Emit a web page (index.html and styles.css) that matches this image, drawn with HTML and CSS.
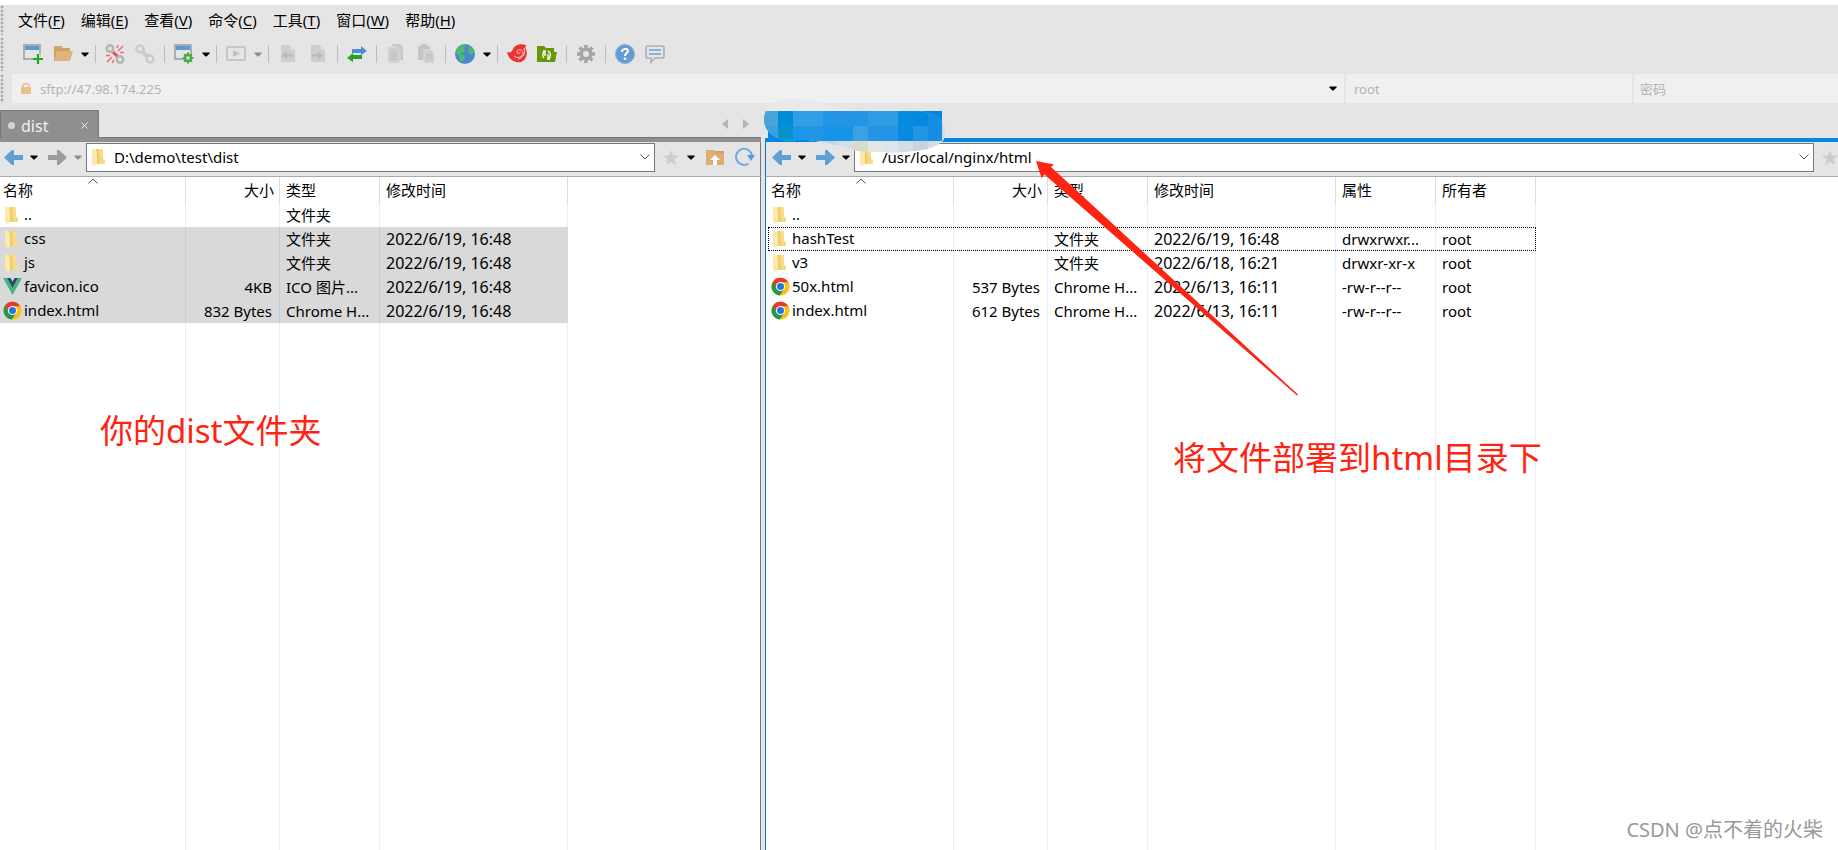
FILE: index.html
```html
<!DOCTYPE html>
<html lang="zh-CN">
<head>
<meta charset="utf-8">
<title>SFTP</title>
<link rel="stylesheet" href="styles.css">
</head>
<body>
<svg class="defs" aria-hidden="true">
  <symbol id="caret" viewBox="0 0 8 5"><path d="M0.500 0.500h7v1l-3 3h-1l-3-3z" fill="currentColor"/></symbol>
  <symbol id="chevron" viewBox="0 0 10 6"><path d="M0.500 0.500L5 5l4.500-4.500" fill="none" stroke="#555" stroke-width="1"/></symbol>
  <symbol id="folder" viewBox="0 0 13 17"><path d="M4 0h7v10l2 1v4H4z" fill="#f3cd67"/><path d="M7 0h4v10l2 1v4H8z" fill="#f8dc86"/><path d="M0 0h3l2 3v11l-2 3-3-2z" fill="#fde9ae"/></symbol>
  <symbol id="vue" viewBox="0 0 19 17"><path d="M0 0h4l5.500 9.500L15 0h4L9.500 17z" fill="#41b883"/><path d="M4 0h3.500l2 3.500 2-3.500H15L9.500 9.700z" fill="#34495e"/></symbol>
  <symbol id="chrome" viewBox="0 0 20 20"><circle cx="10" cy="10" r="9.500" fill="#fbc116"/><path d="M1.800 5.300A9.500 9.500 0 0 1 18.200 5.500H10L6.200 12z" fill="#e33b2e"/><path d="M1.800 5.300A9.500 9.500 0 0 0 9.300 19.500l4.600-7.200-7.700-.3z" fill="#1e9a49"/><circle cx="10" cy="10" r="4.800" fill="#fff"/><circle cx="10" cy="10" r="3.700" fill="#2b74e4"/></symbol>
  <symbol id="back" viewBox="0 0 19 15"><path d="M0 7.500L8 0h2v5h9v5h-9v5H8z" fill="currentColor"/></symbol>
  <symbol id="forward" viewBox="0 0 19 15"><path d="M19 7.500L11 0H9v5H0v5h9v5h2z" fill="currentColor"/></symbol>
  <symbol id="star" viewBox="0 0 16 15"><path d="M8 0l2 5.300 6 .3-4.500 3.700L13 15l-5-3-5 3 1.500-5.700L0 5.600l6-.3z" fill="#cdcdcd"/></symbol>
  <symbol id="gear" viewBox="0 0 20 20"><g stroke="currentColor" stroke-width="3.500"><path d="M10 1v18M1 10h18M3.600 3.600l12.800 12.800M16.400 3.600L3.600 16.400"/></g><circle cx="10" cy="10" r="6.500" fill="currentColor"/><circle cx="10" cy="10" r="3" fill="#e5e5e5"/></symbol>
  <symbol id="window" viewBox="0 0 20 20"><path d="M1 1h16v14H1z" fill="#e5e5e5" stroke="#a9abad" stroke-width="1.800"/><path d="M2 2h14v4H2z" fill="#5a9bd5"/></symbol>
</svg>

<header class="top">
  <nav class="menu" aria-label="菜单">
    <button>文件(<u>F</u>)</button><button>编辑(<u>E</u>)</button><button>查看(<u>V</u>)</button><button>命令(<u>C</u>)</button><button>工具(<u>T</u>)</button><button>窗口(<u>W</u>)</button><button>帮助(<u>H</u>)</button>
  </nav>
  <div class="toolbar" role="toolbar" aria-label="工具栏">
    <button class="tool" aria-label="新建"><svg viewBox="0 0 20 20"><use href="#window"/><path d="M15 10v10M10 15h10" stroke="#e5e5e5" stroke-width="5"/><path d="M15 10v10M10 15h10" stroke="#22a922" stroke-width="2.200"/></svg></button>
    <button class="tool" aria-label="打开"><svg viewBox="0 0 20 20"><path d="M1 2h7l2 2h7v4H1z" fill="#d6a467"/><path d="M1 4h15v13H1z" fill="#d3a062"/><path d="M4 7h16l-3 10H1z" fill="#dfb37c"/></svg></button>
    <button class="drop" aria-label="打开列表"><svg><use href="#caret"/></svg></button>
    <i class="sep"></i>
    <button class="tool" aria-label="断开"><svg viewBox="0 0 20 20" fill="none"><g stroke="#b5b5b5" stroke-width="2.500"><circle cx="5" cy="4.500" r="3.200"/><circle cx="15" cy="15.500" r="3.200"/></g><path d="M7.500 7.500l1.500 1.500M11.500 11.500l1.500 1.500" stroke="#b5b5b5" stroke-width="4"/><path d="M8.500 8.500l3.500 3.500" stroke="#ee4a54" stroke-width="3"/><path d="M13 7l5-5M12 4l1-3M15 8.500h4M7 13l-5 5M5 11.500H1M8.500 16l-1 3" stroke="#ee6a72" stroke-width="1.500"/></svg></button>
    <button class="tool" aria-label="重新连接" disabled><svg viewBox="0 0 20 20" fill="none"><g stroke="#cbcbcb" stroke-width="2.500"><circle cx="5" cy="5" r="3.500"/><circle cx="15" cy="15" r="3.500"/><path d="M7 7l6 6" stroke-width="4"/></g></svg></button>
    <i class="sep"></i>
    <button class="tool" aria-label="属性"><svg viewBox="0 0 20 20"><use href="#window"/><g class="green"><use href="#gear" x="8" y="8" width="12" height="12"/></g></svg></button>
    <button class="drop" aria-label="属性列表"><svg><use href="#caret"/></svg></button>
    <i class="sep"></i>
    <button class="tool" aria-label="运行" disabled><svg viewBox="0 0 20 20"><rect x="1" y="3" width="18" height="13" rx="1" fill="none" stroke="#c5c5c5" stroke-width="2"/><path d="M7 6l7 3.500L7 13z" fill="#c2c2c2"/></svg></button>
    <button class="drop dim" aria-label="运行列表" disabled><svg><use href="#caret"/></svg></button>
    <i class="sep"></i>
    <button class="tool" aria-label="下载" disabled><svg viewBox="0 0 20 20"><path d="M3 1h9l5 5v12H3z" fill="#cecece"/><path d="M12 1v5h5" fill="#dadada"/><path d="M4 11.500l5-4v3h6v2H9v3z" fill="#bababa"/></svg></button>
    <button class="tool" aria-label="上传" disabled><svg viewBox="0 0 20 20"><path d="M3 1h9l5 5v12H3z" fill="#cecece"/><path d="M12 1v5h5" fill="#dadada"/><path d="M15 11.500l-5-4v3H4v2h6v3z" fill="#bababa"/></svg></button>
    <i class="sep"></i>
    <button class="tool" aria-label="传输"><svg viewBox="0 0 20 20"><path d="M5 5h9V2l6 5-6 4V9H5z" fill="#4a8fd6"/><path d="M15 11H6V9l-6 5 6 4v-3h9z" fill="#27a227"/></svg></button>
    <i class="sep"></i>
    <button class="tool" aria-label="复制" disabled><svg viewBox="0 0 20 20"><path d="M6 0h8l3 3v13H6z" fill="#c9c9c9"/><path d="M2 3h8l4 4v12H2z" fill="#cecece" stroke="#dedede"/><path d="M4 9h7M4 12h7M4 15h7" stroke="#bcbcbc"/></svg></button>
    <button class="tool" aria-label="粘贴" disabled><svg viewBox="0 0 20 20"><path d="M2 2h3V0h6v2h3v14H2z" fill="#c5c5c5"/><path d="M8 6h7l3 3v10H8z" fill="#cecece" stroke="#dedede"/><path d="M10 11h6M10 14h6" stroke="#bcbcbc"/></svg></button>
    <i class="sep"></i>
    <button class="tool" aria-label="语言"><svg viewBox="0 0 20 20"><circle cx="10" cy="10" r="10" fill="#4c87cc"/><path d="M3 3l5-2.500 3 1-2 3 1 3-4 2-1 4-4-5zM5 10l5 2-1 4-3 2-2-4zM14 2l4 3 1 4-3 2-3-4z" fill="#4bbd68"/></svg></button>
    <button class="drop" aria-label="语言列表"><svg><use href="#caret"/></svg></button>
    <i class="sep"></i>
    <button class="tool" aria-label="Xshell"><svg viewBox="0 0 20 20"><path d="M0 8c3 1 5 0 6-3 2-5 10-6 14-3-2 0-2 1-1 3 3 8-3 15-10 13-5-1-8-5-9-10z" fill="#ee3431"/><path d="M7 12c3 3 9 1 9-3 0-4-6-4-6-1 0 2 3 2 3 0M17 4c2 5-1 10-6 11" fill="none" stroke="#f3d5d5" stroke-width="1"/></svg></button>
    <button class="tool" aria-label="Xftp"><svg viewBox="0 0 20 20"><path d="M0 2h7l2 2h8v4h3l-2 10H0z" fill="#67980b"/><path d="M7 14a4.500 4.500 0 0 1 1-7M11 7a4.500 4.500 0 0 1 0 8M8 6.500V12M11 10v5.500M6 7h3M10 15h3" stroke="#f2f7e8" stroke-width="1.500" fill="none"/></svg></button>
    <i class="sep"></i>
    <button class="tool grey" aria-label="选项"><svg><use href="#gear"/></svg></button>
    <i class="sep"></i>
    <button class="tool" aria-label="帮助"><svg viewBox="0 0 20 20"><circle cx="10" cy="10" r="9.500" fill="#659bd3" stroke="#8db1d6"/><path d="M7 8c0-4 6-4 6-1 0 2-3 2-3 5" fill="none" stroke="#fff" stroke-width="2"/><circle cx="10" cy="14.800" r="1.300" fill="#fff"/></svg></button>
    <button class="tool" aria-label="反馈"><svg viewBox="0 0 20 20"><path d="M3 2h14q2 0 2 2v8q0 2-2 2h-7l-4 4v-4H3q-2 0-2-2V4q0-2 2-2z" fill="#e5e5e5" stroke="#aeb2b6" stroke-width="1.700"/><path d="M4 6h12M4 10h12" stroke="#6aa2da" stroke-width="1.700"/></svg></button>
  </div>
  <form class="session">
    <label class="host"><svg viewBox="0 0 10 11" aria-hidden="true"><path d="M2 5V3.500a3 3 0 0 1 6 0V5" fill="none" stroke="#e6be84" stroke-width="1.600"/><rect y="4" width="10" height="7" rx="1" fill="#e9c08a"/></svg><input aria-label="主机" value="sftp://47.98.174.225"><span class="drop"><svg><use href="#caret"/></svg></span></label>
    <input class="user" aria-label="用户名" placeholder="root">
    <input class="pass" type="password" aria-label="密码" placeholder="密码">
  </form>
</header>

<main class="panes">
  <section class="pane local" aria-label="本地">
    <div class="tabs">
      <button class="tab"><i class="dot"></i><span>dist</span><svg viewBox="0 0 7 7"><path d="M.5.5l6 6M6.500.5l-6 6" stroke="#eee"/></svg></button>
      <div class="scroll"><svg viewBox="0 0 6 10"><path d="M6 0v10L0 5z" fill="#b5b5b5"/></svg><svg viewBox="0 0 6 10"><path d="M0 0v10l6-5z" fill="#b5b5b5"/></svg></div>
    </div>
    <div class="bar">
      <button class="arrow" aria-label="后退"><svg><use href="#back"/></svg></button><button class="drop" aria-label="后退历史"><svg><use href="#caret"/></svg></button>
      <button class="arrow dim" aria-label="前进" disabled><svg><use href="#forward"/></svg></button><button class="drop dim" aria-label="前进历史" disabled><svg><use href="#caret"/></svg></button>
      <label class="path"><svg class="fold"><use href="#folder"/></svg><input aria-label="路径" value="D:\demo\test\dist"><svg class="chev"><use href="#chevron"/></svg></label>
      <button class="fav" aria-label="收藏"><svg><use href="#star"/></svg></button>
      <button class="drop favs" aria-label="收藏列表"><svg><use href="#caret"/></svg></button>
      <button class="tool up" aria-label="上级目录"><svg viewBox="0 0 20 20"><path d="M1 3h7l2 1h9v14H1z" fill="#d2a061"/><path d="M1 3h7l2 3h9v12H1z" fill="#dcae72"/><path d="M10 8l5 5h-3v5H8v-5H5z" fill="#fff"/></svg></button>
      <button class="tool" aria-label="刷新"><svg viewBox="0 0 20 20"><path d="M17 9a8 8 0 1 0-3.500 7.500" fill="none" stroke="#74a9de" stroke-width="2"/><path d="M12 8h8l-4 6z" fill="#5a9bd8"/></svg></button>
    </div>
    <div class="list">
      <table class="four">
        <colgroup><col class="c-name"><col class="c-size"><col class="c-type"><col class="c-date"></colgroup>
        <thead><tr><th>名称<svg class="sort"><use href="#chevron"/></svg></th><th class="num">大小</th><th>类型</th><th>修改时间</th></tr></thead>
        <tbody>
          <tr><td><svg class="fold"><use href="#folder"/></svg>..</td><td></td><td>文件夹</td><td></td></tr>
          <tr class="sel"><td><svg class="fold"><use href="#folder"/></svg>css</td><td></td><td>文件夹</td><td class="date">2022/6/19, 16:48</td></tr>
          <tr class="sel"><td><svg class="fold"><use href="#folder"/></svg>js</td><td></td><td>文件夹</td><td class="date">2022/6/19, 16:48</td></tr>
          <tr class="sel"><td><svg class="ico"><use href="#vue"/></svg>favicon.ico</td><td class="num">4KB</td><td>ICO 图片...</td><td class="date">2022/6/19, 16:48</td></tr>
          <tr class="sel"><td><svg class="ico"><use href="#chrome"/></svg>index.html</td><td class="num">832 Bytes</td><td>Chrome H...</td><td class="date">2022/6/19, 16:48</td></tr>
          <tr class="rest"><td></td><td></td><td></td><td></td></tr>
        </tbody>
      </table>
      <p class="note left">你的dist文件夹</p>
    </div>
  </section>

  <section class="pane remote" aria-label="远程">
    <div class="tabs"><button class="tab" aria-label="会话"></button></div>
    <div class="bar">
      <button class="arrow" aria-label="后退"><svg><use href="#back"/></svg></button><button class="drop" aria-label="后退历史"><svg><use href="#caret"/></svg></button>
      <button class="arrow" aria-label="前进"><svg><use href="#forward"/></svg></button><button class="drop" aria-label="前进历史"><svg><use href="#caret"/></svg></button>
      <label class="path"><svg class="fold"><use href="#folder"/></svg><input aria-label="路径" value="/usr/local/nginx/html"><svg class="chev"><use href="#chevron"/></svg></label>
      <button class="fav" aria-label="收藏"><svg><use href="#star"/></svg></button>
    </div>
    <div class="list">
      <table class="six">
        <colgroup><col class="c-name"><col class="c-size"><col class="c-type"><col class="c-date"><col class="c-type"><col class="c-type"></colgroup>
        <thead><tr><th>名称<svg class="sort"><use href="#chevron"/></svg></th><th class="num">大小</th><th>类型</th><th>修改时间</th><th>属性</th><th>所有者</th></tr></thead>
        <tbody>
          <tr><td><svg class="fold"><use href="#folder"/></svg>..</td><td></td><td></td><td></td><td></td><td></td></tr>
          <tr class="focus"><td><svg class="fold"><use href="#folder"/></svg>hashTest</td><td></td><td>文件夹</td><td class="date">2022/6/19, 16:48</td><td>drwxrwxr...</td><td>root</td></tr>
          <tr><td><svg class="fold"><use href="#folder"/></svg>v3</td><td></td><td>文件夹</td><td class="date">2022/6/18, 16:21</td><td>drwxr-xr-x</td><td>root</td></tr>
          <tr><td><svg class="ico"><use href="#chrome"/></svg>50x.html</td><td class="num">537 Bytes</td><td>Chrome H...</td><td class="date">2022/6/13, 16:11</td><td>-rw-r--r--</td><td>root</td></tr>
          <tr><td><svg class="ico"><use href="#chrome"/></svg>index.html</td><td class="num">612 Bytes</td><td>Chrome H...</td><td class="date">2022/6/13, 16:11</td><td>-rw-r--r--</td><td>root</td></tr>
          <tr class="rest"><td></td><td></td><td></td><td></td><td></td><td></td></tr>
        </tbody>
      </table>
      <p class="note right">将文件部署到html目录下</p>
      <p class="mark">CSDN @点不着的火柴</p>
    </div>
    <svg class="smear" viewBox="0 0 184 58" aria-hidden="true">
      <clipPath id="blob"><path d="M2 21C3 8 12 1 24 1c26-1 48 8 72 12h50c18-1 36 4 37 18 0 8 0 12-6 15-8 5-16 6-24 7-10 1-20 2-30 1-10 0-18 0-27-1-9-2-15-5-23-6-9-2-18-4-27-5-12-1-22 3-30-2C8 37 2 30 2 21z"/></clipPath>
      <g clip-path="url(#blob)">
        <path d="M0 0h184v58H0z" fill="#d3dde3"/><path d="M0 0h184v13H0z" fill="#e9e9e9"/>
        <path d="M0 13h180v30H0z" fill="#2495e4"/>
        <path d="M0 13h16v15H0z" fill="#4aa3dc"/><path d="M0 28h16v15H0z" fill="#3ba0e2"/>
        <path d="M16 13h15v15H16z" fill="#008cd7"/><path d="M16 28h15v15H16z" fill="#0793ca"/>
        <path d="M31 13h30v15H31z" fill="#329ee6"/><path d="M31 28h15v15H31z" fill="#1c96e8"/><path d="M61 28h30v15H61z" fill="#1694e8"/>
        <path d="M91 28h15v15H91z" fill="#39a1e4"/><path d="M106 13h30v15h-30z" fill="#309ce4"/><path d="M136 13h15v30h-15z" fill="#078be0"/><path d="M151 13h15v15h-15z" fill="#0687e0"/><path d="M166 13h14v30h-14z" fill="#148ee0"/>
        <path d="M61 43h15v15H61z" fill="#c4d8e8"/><path d="M91 43h15v15H91z" fill="#dadccb"/><path d="M106 43h15v15h-15z" fill="#e2e7e4"/><path d="M121 43h15v15h-15z" fill="#dce5e9"/><path d="M151 43h15v15h-15z" fill="#c9d3df"/>
      </g>
    </svg>
    <svg class="pointer" viewBox="0 0 262 235" aria-hidden="true"><path d="M0 0l18 3.500-3 2.500L262 233.500l-1 1L8.500 13.500 5.500 17z" fill="#ff2412"/></svg>
  </section>
</main>
</body>
</html>
```
FILE: styles.css
```css
* { box-sizing: border-box; }

body {
  margin: 0;
  height: 100vh;
  display: flex;
  flex-direction: column;
  overflow: hidden;
  background: #e5e5e5;
  border-top: 5px solid #fff;
  color: #000;
  font: 15px/20px "Noto Sans", "Noto Sans CJK SC", sans-serif;
}

button, input {
  font: inherit;
  color: inherit;
  border: 0;
  padding: 0;
  margin: 0;
  background: none;
  min-width: 0;
}

svg { display: block; flex: none; }
p { margin: 0; }
.defs { position: absolute; width: 0; height: 0; }

/* menu, toolbar and session bar */
.menu, .toolbar, .session {
  display: flex;
  align-items: center;
  background: radial-gradient(circle at 2px 2px, #aaa 1px, #f4f4f4 2px, transparent 2px) 0 0 / 4px 4px repeat-y;
}
.menu { height: 30px; padding-left: 18px; gap: 16px; }
.toolbar { height: 34px; margin-top: 2px; padding-left: 18px; }
.session { height: 29px; margin-top: 3px; padding-left: 12px; gap: 2px; color: #b3b3b3; font-size: 13px; }
.menu u { text-decoration-thickness: 1px; text-underline-offset: 2px; }

.tool { width: 30px; height: 30px; padding: 5px; flex: none; }
.tool svg { width: 20px; height: 20px; }
.green { color: #43ad3c; }
.grey { color: #a5a5a5; }
.drop { width: 13px; height: 20px; flex: none; display: grid; place-items: center; color: #000; }
.drop svg { width: 8px; height: 5px; }
.drop.dim { color: #8c8c8c; }
.sep { width: 1px; height: 18px; margin: 0 4px; background: #bdbdbd; flex: none; }

.host, .user, .pass { background: #f0f0f0; height: 29px; }
.host { flex: 1318; display: flex; align-items: center; padding: 0 5px 0 9px; gap: 9px; }
.host > svg { width: 10px; height: 11px; }
.host input { flex: 1; }
.user { flex: 278; padding-left: 8px; }
.pass { flex: 198; padding-left: 6px; }
.session input::placeholder { color: #b3b3b3; opacity: 1; }

/* two file panes */
.panes { flex: 1; min-height: 0; display: flex; gap: 4px; }
.pane { display: flex; flex-direction: column; min-width: 0; position: relative; }
.local { flex: 761; }
.remote { flex: 1073; }

.tabs { height: 39px; display: flex; align-items: flex-end; border-bottom: 4px solid #8f8f8f; box-shadow: inset 0 -1px #777; }
.local .tab {
  width: 99px;
  height: 28px;
  display: flex;
  align-items: center;
  gap: 6px;
  padding: 2px 10px 0 7px;
  background: #8f8f8f;
  border: 1px solid #777;
  border-bottom: 0;
  color: #f0f0f0;
  font-size: 16px;
}
.tab span { flex: 1; text-align: left; }
.tab svg { width: 7px; height: 7px; }
.dot { width: 7px; height: 7px; border-radius: 50%; background: #d5d5d5; }
.scroll { margin-left: auto; height: 28px; display: flex; gap: 15px; padding: 9px 12px 0 0; }
.scroll svg { width: 6px; height: 10px; }
.remote .tabs { border-bottom-color: #0288e0; box-shadow: none; }
.remote .tab { width: 174px; height: 27px; margin-left: 3px; background: #0288e0; }

.bar {
  height: 35px;
  display: flex;
  align-items: center;
  padding-left: 4px;
  border-bottom: 1px solid #aaa;
  padding-bottom: 4px;
}
.local .bar, .local .list { border-right: 1px solid #777; }
.remote .bar, .remote .list { border-left: 1px solid #0078c8; }
.remote .bar { padding-left: 6px; }
.arrow { width: 19px; height: 15px; color: #5f9fd8; flex: none; }
.arrow svg { width: 19px; height: 15px; }
.arrow.dim { color: #9c9c9c; }
.bar .arrow + .drop { width: 25px; padding-right: 4px; }
.bar .path + .fav { margin-left: 8px; }
.path {
  flex: 1;
  min-width: 0;
  height: 29px;
  margin-left: -6px;
  display: flex;
  align-items: center;
  padding: 0 4px 0 5px;
  background: #fff;
  border: 1px solid #777;
}
.path input { flex: 1; margin-left: 9px; }
.path .fold { width: 13px; height: 17px; }
.chev { width: 10px; height: 6px; }
.fav { width: 16px; height: 15px; flex: none; }
.fav svg { width: 16px; height: 15px; }
.favs { width: 23px; }
.up { margin-left: -2px; }

/* file lists */
.list { flex: 1; min-height: 0; background: #fff; position: relative; }
.remote .list { padding-left: 2px; }
table { height: 100%; table-layout: fixed; border-collapse: separate; border-spacing: 0; }
.four { width: 568px; }
.six { width: 768px; }
.c-name { width: 186px; }
.c-size { width: 94px; }
.c-type { width: 100px; }
.c-date { width: 188px; }
th, td { padding: 0 0 0 6px; text-align: left; font-weight: 400; white-space: nowrap; }
th { height: 26px; border-right: 1px solid #ddd; position: relative; }
td { height: 24px; border-right: 1px solid #e8f1fb; }
th:first-child, td:first-child { padding-left: 3px; }
th.num { text-align: right; padding-right: 5px; }
td.num { text-align: right; padding-right: 7px; }
td:first-child svg { display: inline-block; vertical-align: middle; }
td .fold { width: 13px; height: 17px; margin: 0 6px 2px 2px; }
td .ico { width: 19px; height: 19px; margin: 0 2px 2px 0; }
.date { font-size: 16px; }
.sort { position: absolute; left: 50%; top: 1px; width: 10px; height: 6px; margin-left: -5px; transform: scaleY(-1); }
.sel td { background: #d9d9d9; border-right-color: #c6ced4; }
.sel td:last-child { border-right-color: #d9d9d9; }
.focus { outline: 1px dotted #000; outline-offset: -1px; }
.rest td { height: auto; }

/* annotations over the lists */
.note { position: absolute; color: #ff2412; font-size: 33px; line-height: 40px; white-space: nowrap; }
.note.left { left: 100px; top: 234px; }
.note.right { left: 407px; top: 261px; }
.mark { position: absolute; right: 15px; bottom: 8px; color: #999; font-size: 20px; line-height: 24px; }
.smear { position: absolute; left: -3px; top: -5px; width: 184px; height: 58px; }
.pointer { position: absolute; left: 271px; top: 58px; width: 262px; height: 235px; }
```
